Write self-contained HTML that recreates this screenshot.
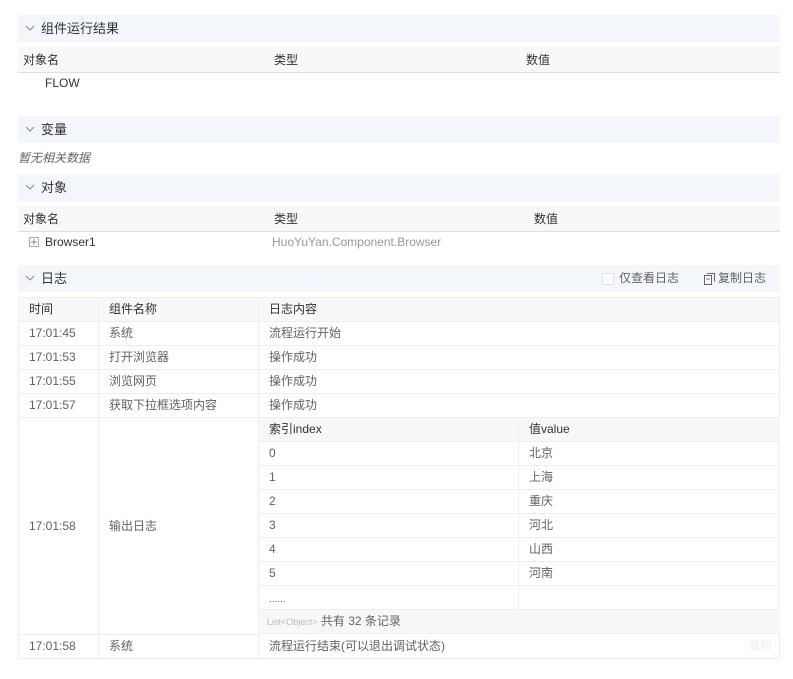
<!DOCTYPE html>
<html><head><meta charset="utf-8"><style>
*{margin:0;padding:0;box-sizing:border-box}
body{width:793px;height:679px;background:#fff;font-family:"Liberation Sans","Noto Sans CJK SC",sans-serif;font-size:12px;color:#606266;position:relative;overflow:hidden}
.a{position:absolute;white-space:nowrap}
.hd{position:absolute;left:18px;width:762px;height:27px;background:#f3f6fb;color:#303133;font-size:13px;line-height:27px;padding-left:23px}
.hd svg{position:absolute;left:7px;top:9px}
.th{position:absolute;left:18px;width:762px;height:26px;background:#f7f8f9;border-bottom:1px solid #dcdfe6;color:#303133;line-height:26px}
.cell{position:absolute;border-right:1px solid #ebeef5;border-bottom:1px solid #ebeef5;line-height:23px;padding-left:10px;white-space:nowrap}
</style></head><body>
<div class="hd" style="top:15px"><svg width="10" height="8"><path d="M1 2l4 4 4-4" fill="none" stroke="#888" stroke-width="1"/></svg>组件运行结果</div>
<div class="th" style="top:47px"><span class="a" style="left:5px">对象名</span><span class="a" style="left:256px">类型</span><span class="a" style="left:508px">数值</span></div>
<div class="a" style="left:45px;top:76px;color:#303133">FLOW</div>
<div class="hd" style="top:116px"><svg width="10" height="8"><path d="M1 2l4 4 4-4" fill="none" stroke="#888" stroke-width="1"/></svg>变量</div>
<div class="a" style="left:18px;top:149px;font-style:italic">暂无相关数据</div>
<div class="hd" style="top:174px"><svg width="10" height="8"><path d="M1 2l4 4 4-4" fill="none" stroke="#888" stroke-width="1"/></svg>对象</div>
<div class="th" style="top:206px"><span class="a" style="left:5px">对象名</span><span class="a" style="left:256px">类型</span><span class="a" style="left:516px">数值</span></div>
<svg class="a" style="left:29px;top:237px" width="10" height="10"><rect x="0.5" y="0.5" width="9" height="9" fill="none" stroke="#aaa"/><path d="M2 5h6M5 2v6" stroke="#888"/></svg>
<div class="a" style="left:45px;top:235px;color:#303133">Browser1</div>
<div class="a" style="left:272px;top:235px;color:#999">HuoYuYan.Component.Browser</div>
<div class="hd" style="top:265px"><svg width="10" height="8"><path d="M1 2l4 4 4-4" fill="none" stroke="#888" stroke-width="1"/></svg>日志
<span class="a" style="left:584px;top:8px;width:12px;height:12px;border:1px solid #dcdfe6;background:#fff;border-radius:2px"></span>
<span class="a" style="left:601px;top:0;font-size:12px;color:#606266">仅查看日志</span>
<svg class="a" style="left:686px;top:8px" width="11" height="12"><rect x="0.5" y="2.5" width="7" height="9" fill="none" stroke="#666"/><path d="M3 .5h7.5v8" fill="none" stroke="#666"/><path d="M2.5 6h3" stroke="#666"/></svg>
<span class="a" style="left:700px;top:0;font-size:12px;color:#606266">复制日志</span></div>
<div class="a" style="left:18px;top:297px;width:762px;height:362px;border:1px solid #ebeef5;border-right:none;border-bottom:none"></div>
<div class="a" style="left:19px;top:298px;width:761px;height:23px;background:#f7f8f9"></div>
<!-- rows -->
<div class="cell" style="left:19px;top:298px;width:80px;height:24px;color:#303133">时间</div>
<div class="cell" style="left:99px;top:298px;width:160px;height:24px;color:#303133">组件名称</div>
<div class="cell" style="left:259px;top:298px;width:521px;height:24px;color:#303133">日志内容</div>
<div class="cell" style="left:19px;top:322px;width:80px;height:24px">17:01:45</div><div class="cell" style="left:99px;top:322px;width:160px;height:24px">系统</div><div class="cell" style="left:259px;top:322px;width:521px;height:24px">流程运行开始</div>
<div class="cell" style="left:19px;top:346px;width:80px;height:24px">17:01:53</div><div class="cell" style="left:99px;top:346px;width:160px;height:24px">打开浏览器</div><div class="cell" style="left:259px;top:346px;width:521px;height:24px">操作成功</div>
<div class="cell" style="left:19px;top:370px;width:80px;height:24px">17:01:55</div><div class="cell" style="left:99px;top:370px;width:160px;height:24px">浏览网页</div><div class="cell" style="left:259px;top:370px;width:521px;height:24px">操作成功</div>
<div class="cell" style="left:19px;top:394px;width:80px;height:24px">17:01:57</div><div class="cell" style="left:99px;top:394px;width:160px;height:24px">获取下拉框选项内容</div><div class="cell" style="left:259px;top:394px;width:521px;height:24px">操作成功</div>
<div class="cell" style="left:19px;top:418px;width:80px;height:217px;line-height:217px">17:01:58</div><div class="cell" style="left:99px;top:418px;width:160px;height:217px;line-height:217px">输出日志</div>
<div class="a" style="left:259px;top:418px;width:520px;height:23px;background:#f7f8f9"></div>
<div class="cell" style="left:259px;top:418px;width:260px;height:24px;color:#303133">索引index</div><div class="cell" style="left:519px;top:418px;width:260px;height:24px;color:#303133">值value</div>
<div class="cell" style="left:259px;top:442px;width:260px;height:24px">0</div><div class="cell" style="left:519px;top:442px;width:260px;height:24px">北京</div>
<div class="cell" style="left:259px;top:466px;width:260px;height:24px">1</div><div class="cell" style="left:519px;top:466px;width:260px;height:24px">上海</div>
<div class="cell" style="left:259px;top:490px;width:260px;height:24px">2</div><div class="cell" style="left:519px;top:490px;width:260px;height:24px">重庆</div>
<div class="cell" style="left:259px;top:514px;width:260px;height:24px">3</div><div class="cell" style="left:519px;top:514px;width:260px;height:24px">河北</div>
<div class="cell" style="left:259px;top:538px;width:260px;height:24px">4</div><div class="cell" style="left:519px;top:538px;width:260px;height:24px">山西</div>
<div class="cell" style="left:259px;top:562px;width:260px;height:24px">5</div><div class="cell" style="left:519px;top:562px;width:260px;height:24px">河南</div>
<div class="cell" style="left:259px;top:586px;width:260px;height:24px;line-height:28px;font-size:10px">......</div><div class="cell" style="left:519px;top:586px;width:260px;height:24px"></div>
<div class="a" style="left:259px;top:610px;width:521px;height:24px;background:#f7f8fa;border-bottom:1px solid #ebeef5;line-height:23px;padding-left:8px"><span style="font-size:9px;color:#bbb">List&lt;Object&gt;</span> <span style="color:#606266">共有 32 条记录</span></div>
<div class="cell" style="left:19px;top:635px;width:80px;height:24px">17:01:58</div><div class="cell" style="left:99px;top:635px;width:160px;height:24px">系统</div><div class="cell" style="left:259px;top:635px;width:521px;height:24px">流程运行结束(可以退出调试状态)<span class="a" style="left:490px;color:#eee;font-size:11px">复制</span></div>
</body></html>
